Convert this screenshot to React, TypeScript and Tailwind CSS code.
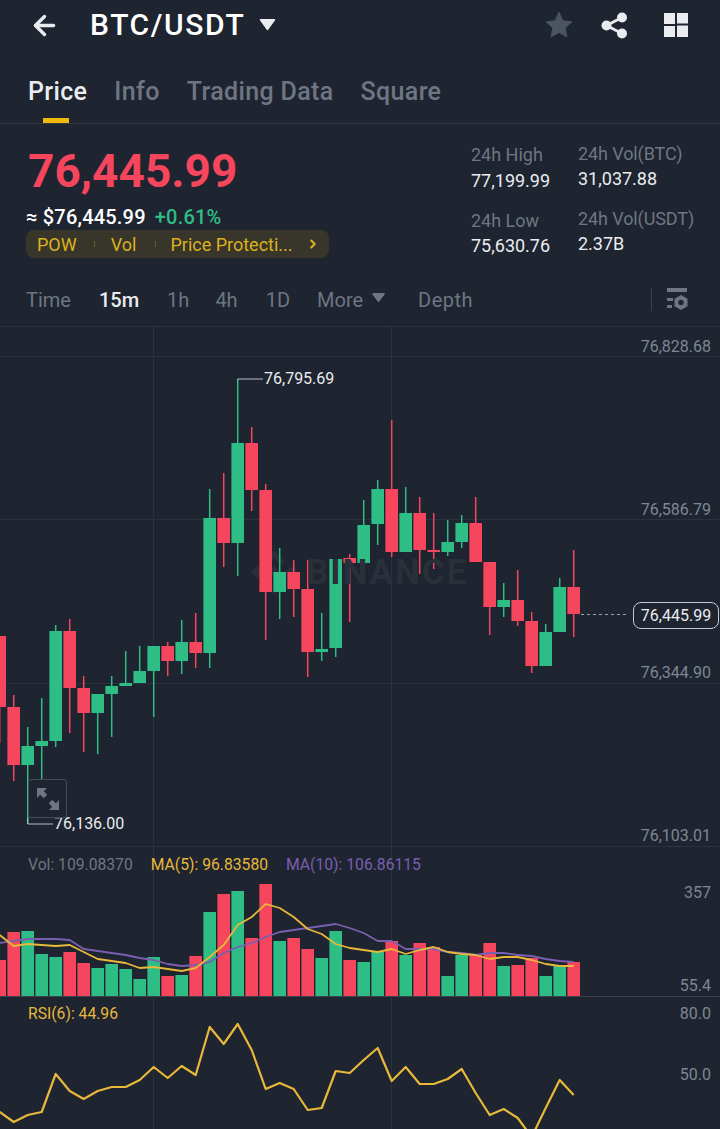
import React from 'react';
import { ArrowLeft, ChevronRight } from 'lucide-react';

type Candle = [number, number, number, number, 'g' | 'r', number];

// wick top, wick bottom, body top, body bottom, colour, volume bar top
const CANDLES: Candle[] = [
  [636, 743, 636, 707, 'r', 960],
  [695, 781, 707, 765, 'r', 932],
  [727, 824, 746, 765, 'g', 931],
  [698, 780, 741, 746, 'g', 954],
  [625, 747, 631, 741, 'g', 957],
  [619, 733, 631, 688, 'r', 952],
  [676, 752, 688, 713, 'r', 963],
  [694, 754, 694, 713, 'g', 968],
  [676, 737, 686, 694, 'g', 964],
  [651, 686, 683, 686, 'g', 969],
  [646, 683, 671, 683, 'g', 979],
  [646, 717, 646, 671, 'g', 957],
  [642, 676, 646, 661, 'r', 976],
  [620, 674, 642, 661, 'g', 975],
  [613, 668, 642, 653, 'r', 956],
  [489, 668, 518, 653, 'g', 912],
  [473, 567, 518, 543, 'r', 894],
  [379, 576, 443, 543, 'g', 891],
  [427, 511, 443, 490, 'r', 938],
  [484, 640, 490, 592, 'r', 884],
  [548, 619, 572, 592, 'g', 941],
  [560, 617, 572, 589, 'r', 938],
  [560, 677, 589, 652, 'r', 949],
  [613, 661, 649, 652, 'g', 958],
  [559, 657, 559, 648, 'g', 931],
  [554, 622, 558, 563, 'r', 960],
  [500, 563, 525, 563, 'g', 962],
  [480, 545, 489, 524, 'g', 952],
  [420, 557, 489, 552, 'r', 941],
  [487, 552, 513, 552, 'g', 955],
  [497, 574, 513, 550, 'r', 943],
  [513, 569, 550, 552, 'r', 947],
  [520, 556, 542, 552, 'g', 976],
  [515, 548, 523, 542, 'g', 955],
  [497, 562, 523, 562, 'r', 955],
  [562, 635, 562, 607, 'r', 943],
  [583, 617, 600, 607, 'g', 966],
  [570, 626, 600, 621, 'r', 965],
  [612, 673, 621, 666, 'r', 958],
  [624, 666, 632, 666, 'g', 976],
  [578, 632, 587, 632, 'g', 966],
  [550, 637, 587, 614, 'r', 962],
];

const MA5 = [935, 946, 944, 945, 946, 945, 952, 959, 961, 963, 968, 967, 969, 971, 968, 957, 945, 925, 917, 904, 908, 917, 929, 934, 944, 948, 950, 952, 949, 954, 950, 947, 952, 954, 955, 959, 957, 957, 960, 964, 966, 966];
const MA10 = [943, 941, 939, 939, 939, 940, 949, 951, 953, 955, 958, 960, 964, 966, 965, 962, 953, 947, 943, 937, 932, 930, 928, 926, 924, 928, 933, 941, 941, 949, 949, 949, 952, 953, 955, 953, 953, 955, 956, 959, 961, 962];
const RSI = [1112, 1122, 1115, 1112, 1074, 1091, 1099, 1091, 1087, 1087, 1080, 1067, 1078, 1066, 1075, 1027, 1044, 1024, 1050, 1089, 1083, 1089, 1110, 1108, 1071, 1073, 1060, 1048, 1081, 1067, 1084, 1084, 1079, 1069, 1093, 1115, 1109, 1118, 1137, 1108, 1080, 1095];

const GREEN = '#2ebd85';
const RED = '#f6465d';
const cx = (i: number) => i * 14 - 0.3;
const points = (ys: number[]) => ys.map((y, i) => `${cx(i)},${y}`).join(' ');

const TABS = ['Info', 'Trading Data', 'Square'];

function Chart() {
  return (
    <svg className="absolute inset-0 w-full h-full" viewBox="0 327 720 802">
      {[356.5, 519.5, 683.5, 846.5].map((y) => (
        <line key={y} x1="0" x2="720" y1={y} y2={y} stroke="#2c323c" strokeWidth="1" />
      ))}
      <line x1="0" x2="720" y1="996.5" y2="996.5" stroke="#3d434d" strokeWidth="1" />
      {[153.5, 391.5].map((x) => (
        <line key={x} x1={x} x2={x} y1="327" y2="1129" stroke="#2c323c" strokeWidth="1" />
      ))}
      {/* watermark logo, mostly behind the candles */}
      <g fill="#2a303a">
        <path d="M257 566l6 6-6 6-6-6z" />
        <path d="M274 566l6 6-6 6-6-6z" />
        <path d="M291 566l6 6-6 6-6-6z" />
        <path d="M274 550l11 11-4 4-7-7-7 7-4-4z" />
        <path d="M274 594l11-11-4-4-7 7-7-7-4 4z" />
      </g>
      {CANDLES.map(([wt, wb, bt, bb, c, vol], i) => {
        const fill = c === 'g' ? GREEN : RED;
        return (
          <g key={i}>
            <rect x={cx(i) - 0.75} y={wt} width="1.5" height={wb - wt} fill={fill} />
            <rect x={cx(i) - 6.3} y={bt} width="12.6" height={Math.max(bb - bt, 2)} fill={fill} />
            <rect x={cx(i) - 6.3} y={vol} width="12.6" height={996 - vol} fill={fill} />
          </g>
        );
      })}
      <polyline points={points(MA10)} fill="none" stroke="#7a5fb0" strokeWidth="1.8" strokeLinejoin="round" />
      <polyline points={points(MA5)} fill="none" stroke="#e8b83a" strokeWidth="1.8" strokeLinejoin="round" />
      <polyline points={points(RSI)} fill="none" stroke="#e8b83a" strokeWidth="2.2" strokeLinejoin="round" />
      {/* high / low leaders */}
      <polyline points="237.7,380 237.7,379 263,379" fill="none" stroke="#b7bdc6" strokeWidth="1" />
      <polyline points="27.7,818 27.7,824 53,824" fill="none" stroke="#b7bdc6" strokeWidth="1" />
      <line x1="581" x2="627" y1="614.5" y2="614.5" stroke="#9aa1ac" strokeWidth="1" strokeDasharray="3 3" />
    </svg>
  );
}

function AxisLabel({ className, children }: { className: string; children: React.ReactNode }) {
  return <span className={`absolute right-[9px] text-[16px] leading-[20px] text-[#7f8793] ${className}`}>{children}</span>;
}

export default function App() {
  return (
    <div className="w-[720px] h-[1129px] overflow-hidden bg-[#1e2430] text-[#eaecef] font-['Roboto',sans-serif] flex flex-col">
      {/* Top bar */}
      <div className="h-[50px] flex items-center pl-[29px] pr-[32px]">
        <ArrowLeft className="w-[31px] h-[31px] text-[#eaecef]" strokeWidth={2.6} />
        <span className="ml-[30px] text-[30px] leading-none font-medium tracking-[1.6px] text-white">BTC/USDT</span>
        <svg className="ml-[14px] mb-[2px] w-[17px] h-[13px]" viewBox="0 0 17 13">
          <path d="M1.500 1h14a.8.8 0 0 1 .6 1.300L9 12a.7.7 0 0 1-1.100 0L.9 2.300A.8.8 0 0 1 1.500 1z" fill="#eaecef" />
        </svg>
        <div className="ml-auto flex items-center">
          <svg className="w-[28px] h-[28px] mr-[28px]" viewBox="0 0 24 24">
            <path d="M12 1.200l3.200 7.200 7.600.8-5.700 5.200 1.600 7.600L12 18.200l-6.700 3.800 1.600-7.600L1.200 9.200l7.600-.8z" fill="#4b5462" stroke="#4b5462" strokeWidth="1" strokeLinejoin="round" />
          </svg>
          <svg className="w-[27px] h-[27px] mr-[36px]" viewBox="0 0 27 27">
            <circle cx="21" cy="5.500" r="5" fill="#eaecef" />
            <circle cx="5.500" cy="13.500" r="5" fill="#eaecef" />
            <circle cx="21" cy="21.500" r="5" fill="#eaecef" />
            <path d="M21 5.500L5.500 13.500L21 21.500" fill="none" stroke="#eaecef" strokeWidth="2.800" />
          </svg>
          <svg className="w-[24px] h-[24px]" viewBox="0 0 24 24" fill="#eaecef">
            <rect x="0" y="0" width="11" height="11" />
            <rect x="13" y="0" width="11" height="10.500" />
            <rect x="0" y="13" width="11" height="11" />
            <rect x="13" y="12.500" width="11" height="11.500" />
          </svg>
        </div>
      </div>

      {/* Tabs */}
      <div className="h-[74px] border-b border-[#353b45] flex items-start pl-[28px] gap-[27px] pt-[27px]">
        <div className="relative h-[46px]">
          <span className="text-[25px] leading-[30px] font-medium tracking-[0.35px] text-[#eaecef]">Price</span>
          <div className="absolute left-[15px] bottom-0 w-[26px] h-[5px] bg-[#f0b90b]" />
        </div>
        {TABS.map((t) => (
          <span key={t} className="text-[25px] leading-[30px] font-medium tracking-[0.35px] text-[#6e7683]">{t}</span>
        ))}
      </div>

      {/* Price summary */}
      <div className="h-[150px] flex pl-[26px] pt-[20px]">
        <div className="w-[445px]">
          <div className="pl-[2px] text-[46px] leading-[54px] font-bold text-[#f6465d]">76,445.99</div>
          <div className="mt-[7px] flex items-center h-[24px] text-[20px] leading-[24px] font-medium tracking-[0.2px]">
            <span className="text-white">≈ $76,445.99</span>
            <span className="ml-[9px] text-[#2ebd85]">+0.61%</span>
          </div>
          <div className="mt-[1px] w-[303px] h-[28px] rounded-[8px] bg-[#38352a] flex items-center pl-[11px] text-[18px] text-[#dcb21c]">
            <span>POW</span>
            <span className="ml-[17px] w-px h-[6px] bg-[#6b5f2e]" />
            <span className="ml-[16px]">Vol</span>
            <span className="ml-[19px] w-px h-[6px] bg-[#6b5f2e]" />
            <span className="ml-[14px]">Price Protecti...</span>
            <ChevronRight className="ml-[13px] w-[14px] h-[14px]" strokeWidth={3.500} />
          </div>
        </div>
        <div className="w-[107px] -mt-[1px]">
          <div className="text-[18px] leading-[24px] text-[#6e7683]">24h High</div>
          <div className="mt-[3px] text-[18px] leading-[22px] text-[#eaecef]">77,199.99</div>
          <div className="mt-[17px] text-[18px] leading-[24px] text-[#6e7683]">24h Low</div>
          <div className="mt-[2px] text-[18px] leading-[22px] text-[#eaecef]">75,630.76</div>
        </div>
        <div className="-mt-[2px]">
          <div className="text-[18px] leading-[24px] tracking-[-0.1px] text-[#6e7683] whitespace-nowrap">24h Vol(BTC)</div>
          <div className="mt-[2px] text-[18px] leading-[22px] text-[#eaecef]">31,037.88</div>
          <div className="mt-[17px] text-[18px] leading-[24px] tracking-[-0.1px] text-[#6e7683] whitespace-nowrap">24h Vol(USDT)</div>
          <div className="mt-[2px] text-[18px] leading-[22px] text-[#eaecef]">2.37B</div>
        </div>
      </div>

      {/* Interval toolbar */}
      <div className="h-[53px] border-b border-[#2c323c] pb-[1px] flex items-center pl-[26px] pr-[32px] text-[20px] text-[#6e7683]">
        <span>Time</span>
        <span className="ml-[28px] font-medium text-[#eaecef]">15m</span>
        <span className="ml-[28px]">1h</span>
        <span className="ml-[26px]">4h</span>
        <span className="ml-[28px]">1D</span>
        <span className="ml-[27px]">More</span>
        <svg className="ml-[9px] mb-[5px] w-[13px] h-[9px]" viewBox="0 0 14 10">
          <path d="M1 0h12a1 1 0 0 1 .8 1.600L7.800 9.500a1 1 0 0 1-1.600 0L.2 1.600A1 1 0 0 1 1 0z" fill="#6e7683" />
        </svg>
        <span className="ml-[33px] tracking-[0.5px]">Depth</span>
        <span className="ml-auto w-px h-[23px] bg-[#3d434d]" />
        <svg className="ml-[14px] w-[22px] h-[26px]" viewBox="0 0 22 26" fill="#6e7683">
          <rect x="1" y="1" width="20" height="4" />
          <rect x="1" y="11" width="6" height="3" />
          <rect x="1" y="18" width="5" height="3" />
          <path d="M15 8l6.500 3.800v7.400L15 23l-6.500-3.800v-7.400zM15 12.800a2.700 2.700 0 1 0 0 5.400a2.700 2.700 0 0 0 0-5.400z" fillRule="evenodd" />
        </svg>
      </div>

      {/* Chart area */}
      <div className="relative flex-1">
        <Chart />
        <div className="absolute left-[306px] top-[224px] text-[35px] leading-[44px] font-bold tracking-[2px] text-[#2a303a]">
          BINANCE
        </div>

        <AxisLabel className="top-[10px]">76,828.68</AxisLabel>
        <AxisLabel className="top-[173px]">76,586.79</AxisLabel>
        <AxisLabel className="top-[336px]">76,344.90</AxisLabel>
        <AxisLabel className="top-[499px]">76,103.01</AxisLabel>
        <AxisLabel className="top-[556px]">357</AxisLabel>
        <AxisLabel className="top-[649px]">55.4</AxisLabel>
        <AxisLabel className="top-[677px]">80.0</AxisLabel>
        <AxisLabel className="top-[738px]">50.0</AxisLabel>

        <span className="absolute left-[264px] top-[42px] text-[16px] leading-[20px] text-[#eaecef]">76,795.69</span>
        <span className="absolute left-[54px] top-[487px] text-[16px] leading-[20px] text-[#eaecef]">76,136.00</span>

        <div className="absolute left-[633px] top-[275px] w-[86px] h-[27px] rounded-[8px] border border-[#c4c9d0] bg-[#1e2430] flex items-center justify-center text-[16px] text-[#eaecef]">
          76,445.99
        </div>

        {/* Fullscreen toggle */}
        <div className="absolute left-[28px] top-[452px] w-[39px] h-[39px] rounded-[3px] border border-[#474d57] flex items-center justify-center">
          <svg className="w-[24px] h-[24px]" viewBox="0 0 24 24" fill="#6e7683">
            <path d="M1 1h10l-3.200 3.200 3.500 3.500-3.600 3.600-3.500-3.500L1 11zM23 23H13l3.200-3.200-3.500-3.500 3.600-3.600 3.500 3.500L23 13z" />
          </svg>
        </div>

        {/* Indicator legends */}
        <div className="absolute left-[28px] top-[528px] flex text-[15.700px] leading-[20px] whitespace-nowrap">
          <span className="text-[#6e7683]">Vol: 109.08370</span>
          <span className="ml-[18px] text-[#e8b83a]">MA(5): 96.83580</span>
          <span className="ml-[18px] text-[#7a5fb0]">MA(10): 106.86115</span>
        </div>
        <span className="absolute left-[28px] top-[677px] text-[15.700px] leading-[20px] text-[#e8b83a]">RSI(6): 44.96</span>
      </div>
    </div>
  );
}
